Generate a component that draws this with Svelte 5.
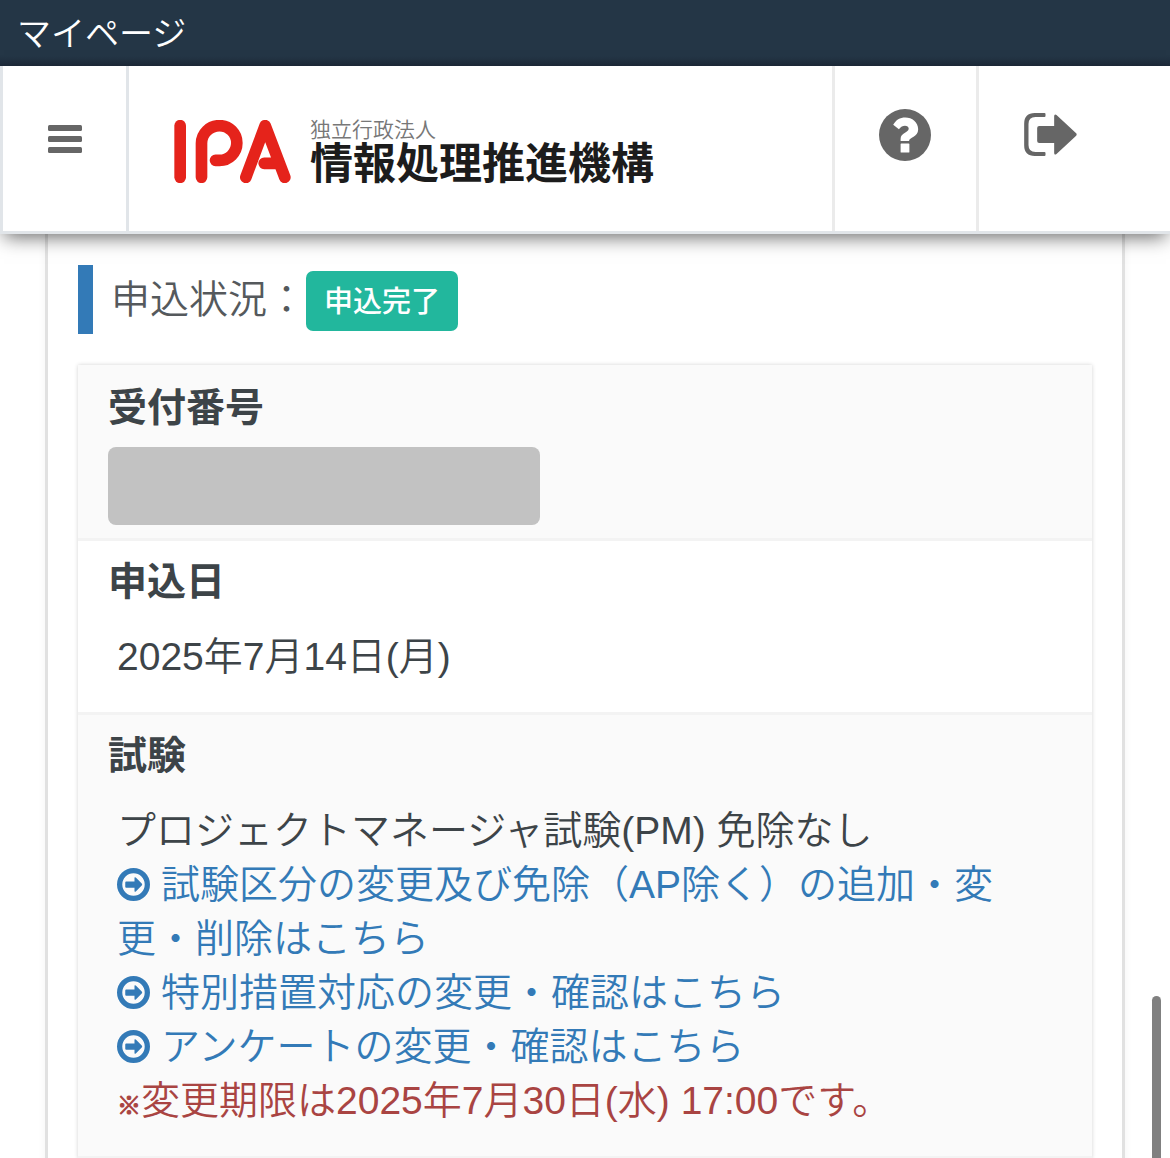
<script>
  const examLinks = [
    '試験区分の変更及び免除（AP除く）の追加・変更・削除はこちら',
    '特別措置対応の変更・確認はこちら',
    'アンケートの変更・確認はこちら'
  ];
</script>

<div class="page">
  <div class="titlebar">マイページ</div>

  <header>
    <button class="menu" aria-label="メニュー">
      <svg viewBox="0 0 34 28" width="34" height="28">
        <rect width="34" height="6" rx="1.5" />
        <rect y="11" width="34" height="6" rx="1.5" />
        <rect y="22" width="34" height="6" rx="1.5" />
      </svg>
    </button>
    <a class="brand" href="#home">
      <svg viewBox="0 0 350 189" width="117" height="63" role="img" aria-label="IPA">
        <g fill="none" stroke="#e5231b" stroke-width="35" stroke-linecap="round" stroke-linejoin="round">
          <path d="M18 17V172" />
          <path d="M82 172V70A54 53 0 0 1 136 17A52 52 0 0 1 136 121H124" />
          <path d="M215 172L273 17L332 172M270 130H312" />
        </g>
      </svg>
      <span class="org">
        <span class="kind">独立行政法人</span>
        <span class="name">情報処理推進機構</span>
      </span>
    </a>
    <button class="help" aria-label="ヘルプ">
      <svg viewBox="0 0 154 154" width="52" height="52">
        <circle cx="77" cy="77" r="77" />
        <path fill="#fff" d="M42 47C50 32 62 25 78 25C98 25 116 39 116 60C116 84 89 84 89 95H64V89C64 70 88 71 88 58C88 48 69 45 59 60ZM66 102H88Q90 102 90 104V127Q90 129 88 129H66Q64 129 64 127V104Q64 102 66 102Z" />
      </svg>
    </button>
    <button class="logout" aria-label="ログアウト">
      <svg viewBox="0 0 158 129" width="53" height="43">
        <path d="M61 0H32Q0 0 0 32V97Q0 129 32 129H61Q64 129 64 126V120Q64 117 61 117H34Q13 117 13 96V33Q13 12 34 12H61Q64 12 64 9V3Q64 0 61 0Z" />
        <path d="M45 39H90V10Q90 2 97 6L156 61Q159 64 156 68L97 123Q90 128 90 119V90H45Q39 90 39 84V45Q39 39 45 39Z" />
      </svg>
    </button>
  </header>

  <main>
    <h2><span>申込状況：</span><span class="badge">申込完了</span></h2>

    <dl>
      <div class="row">
        <dt>受付番号</dt>
        <dd class="masked"></dd>
      </div>
      <div class="row">
        <dt>申込日</dt>
        <dd>2025年7月14日(月)</dd>
      </div>
      <div class="row">
        <dt>試験</dt>
        <dd>
          <p>プロジェクトマネージャ試験(PM) 免除なし</p>
          {#each examLinks as label}
            <p>
              <a href="#change"><svg class="go" viewBox="0 0 100 100" width="33" height="33" aria-hidden="true">
                <circle cx="50" cy="50" r="42" fill="none" stroke="currentColor" stroke-width="16" />
                <path fill="currentColor" d="M28 41H53V30Q53 26 57 29L75 47Q78 50 75 53L57 71Q53 74 53 70V60H28Q25 60 25 57V44Q25 41 28 41Z" />
              </svg>{label}</a>
            </p>
          {/each}
          <p class="deadline"><span class="mark">※</span>変更期限は2025年7月30日(水) 17:00です。</p>
        </dd>
      </div>
    </dl>
  </main>

  <div class="thumb"></div>
</div>

<style>
  :global(body) {
    background: #fff;
  }
  .page {
    position: relative;
    display: flex;
    flex-direction: column;
    height: 100vh;
    overflow: hidden;
    color: #3d4448;
    font-family: 'Liberation Sans', 'Noto Sans CJK JP', sans-serif;
    font-size: 39px;
    font-weight: 350;
    line-height: 54px;
  }
  .titlebar {
    flex: none;
    box-sizing: border-box;
    height: 66px;
    padding: 7px 17px;
    background: linear-gradient(#243646 85%, #1d2a3a);
    color: #fff;
    font-size: 34px;
  }
  header {
    z-index: 1;
    flex: none;
    display: flex;
    box-sizing: border-box;
    height: 168px;
    border-bottom: 3px solid #e1e5e9;
    border-left: 3px solid #e1e5e9;
    background: #fff;
    box-shadow: 0 7px 18px -4px rgba(0, 0, 0, 0.6);
  }
  button {
    flex: none;
    display: flex;
    justify-content: center;
    align-items: flex-start;
    box-sizing: border-box;
    margin: 0;
    padding: 0;
    border: 0;
    background: none;
    fill: #666;
  }
  svg {
    display: block;
  }
  .menu {
    width: 126px;
    padding-top: 59px;
    border-right: 3px solid #e1e5e9;
  }
  .brand {
    flex: 1;
    display: flex;
    align-items: flex-start;
    gap: 19px;
    padding: 54px 0 0 45px;
    color: #1c1c1c;
    text-decoration: none;
  }
  .org {
    display: flex;
    flex-direction: column;
    white-space: nowrap;
  }
  .kind {
    color: #777;
    font-size: 21px;
    line-height: 20px;
  }
  .name {
    font-size: 43px;
    font-weight: 700;
    line-height: 49px;
  }
  .help {
    justify-content: flex-start;
    width: 144px;
    padding: 43px 0 0 44px;
    border-left: 3px solid #ebebeb;
  }
  .logout {
    justify-content: flex-start;
    width: 194px;
    padding: 47px 0 0 45px;
    border-left: 3px solid #ebebeb;
  }
  main {
    flex: 1 0 auto;
    margin: 0 45px;
    padding: 31px 30px 30px;
    border: solid #e1e1e1;
    border-width: 0 3px;
    box-shadow: 0 0 8px rgba(0, 0, 0, 0.05);
  }
  h2 {
    display: flex;
    align-items: center;
    height: 69px;
    margin: 0 0 31px;
    padding-left: 18px;
    border-left: 15px solid #337ab7;
    color: #55595c;
    font-size: 39px;
    font-weight: 350;
  }
  .badge {
    padding: 2px 18px 0;
    border-radius: 7px;
    margin-top: 3px;
    background: #22b79d;
    color: #fff;
    font-size: 29px;
    font-weight: 500;
    line-height: 58px;
  }
  dl {
    margin: 0;
    box-shadow: 0 0 4px rgba(0, 0, 0, 0.18);
  }
  .row {
    padding: 14px 30px 28px;
    border-bottom: 3px solid #f3f3f3;
  }
  .row:nth-child(odd) {
    background: #fafafa;
  }
  .row:first-child {
    padding-top: 16px;
    padding-bottom: 13px;
  }
  dt {
    font-weight: 700;
  }
  dd {
    margin: 21px 9px 0;
  }
  dd.masked {
    width: 432px;
    height: 78px;
    margin: 12px 0 0;
    border-radius: 8px;
    background: #c2c2c2;
  }
  p {
    margin: 0;
  }
  a {
    color: #337ab7;
    text-decoration: none;
  }
  .go {
    display: inline-block;
    margin-right: 11px;
    vertical-align: -3px;
  }
  .deadline {
    color: #a94442;
  }
  .mark {
    font-family: 'Noto Sans CJK JP', sans-serif;
    font-size: 24px;
    font-weight: 700;
    line-height: 24px;
    -webkit-text-stroke: 1px currentColor;
  }
  .thumb {
    position: absolute;
    top: 86vh;
    right: 9px;
    bottom: 0;
    width: 9px;
    border-radius: 5px 5px 0 0;
    background: #808080;
  }
</style>
